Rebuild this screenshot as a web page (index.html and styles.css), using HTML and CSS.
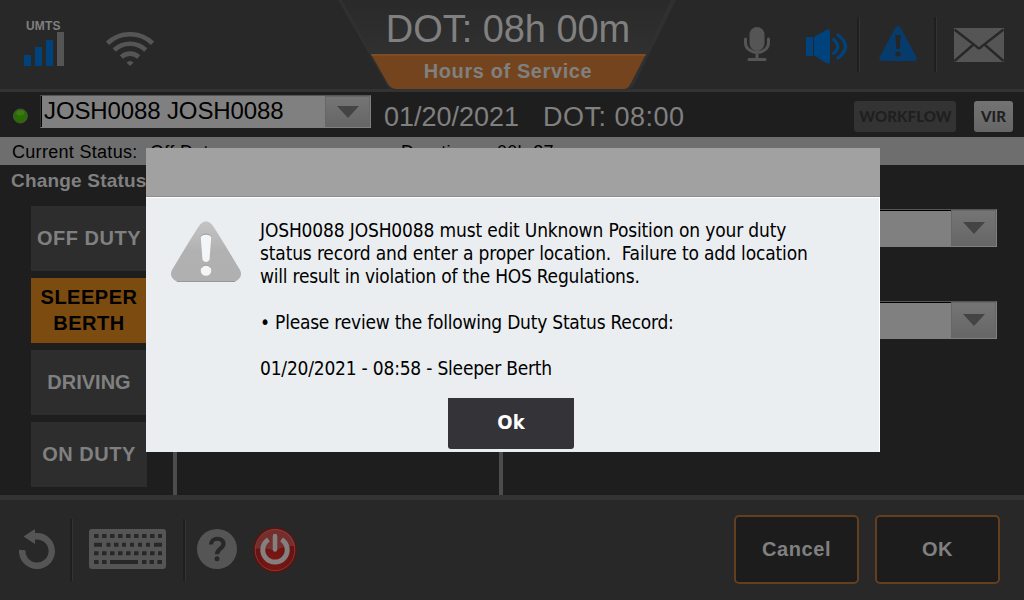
FILE: index.html
```html
<!DOCTYPE html>
<html lang="en">
<head>
<meta charset="utf-8">
<title>Hours of Service</title>
<link rel="stylesheet" href="styles.css">
</head>
<body>
<div class="screen">
  <header class="topbar">
    <div class="signals">
      <div class="umts">
        <span class="umts-label">UMTS</span>
        <svg width="40" height="34" viewBox="0 0 40 34"><path fill="#00427c" d="M0 23h7v11H0zM11 15h7v19h-7zM22 8h7v26h-7z"/><path fill="#555" d="M33 0h7v34h-7z"/></svg>
      </div>
      <svg class="wifi" width="48" height="34" viewBox="0 0 48 34" fill="none" stroke="#555" stroke-width="4.6"><path d="M1.5 11.3a32.5 32.5 0 0 1 45 0M8.2 18a23 23 0 0 1 31.6 0M15.3 25a13 13 0 0 1 17.4 0"/><path fill="#555" stroke="none" d="M20.4 30.4q3.6-3 7.2 0L24 34z"/></svg>
    </div>
    <div class="clock">
      <svg class="clock-shape" width="340" height="90" viewBox="0 0 340 90">
        <defs><linearGradient id="panel" x2="0" y2="1"><stop stop-color="#2a2a2a"/><stop offset="1" stop-color="#303030"/></linearGradient></defs>
        <path fill="#303030" d="M0 0h338L297 83q-4 7-9 7H58q-7 0-10-6z"/>
        <path fill="url(#panel)" d="M4 0h329L308 54H34z"/>
        <path fill="#74441e" d="M33 54h275l-15 29q-3 6-7 6H59q-6 0-9-5z"/>
        <path fill="#7f4d25" d="M33 54h275l-1 2H34z"/>
      </svg>
      <div class="clock-time">DOT: 08h 00m</div>
      <div class="clock-title">Hours of Service</div>
    </div>
    <div class="tools">
      <svg class="mic" width="26" height="34" viewBox="0 0 26 34"><rect x="5.5" width="15" height="24" rx="7.5" fill="#555"/><path d="M1.5 12v4a11.5 9.5 0 0 0 23 0v-4M13 26v6M5 32.5h16" fill="none" stroke="#555" stroke-width="3" stroke-linecap="round"/></svg>
      <svg class="speaker" width="42" height="35" viewBox="0 0 42 35"><path fill="#00427c" d="M0 8h7v19H0zM8 8L21.5.3q2.500-.8 2.500 2.700v29q0 3.500-2.500 2.700L8 26.500z"/><path d="M27.500 10.500q8.500 7 0 14M32 6q15 11.500 0 23" fill="none" stroke="#00427c" stroke-width="3.400" stroke-linecap="round"/></svg>
      <i class="rule"></i>
      <svg class="alert" width="38" height="35" viewBox="0 0 38 35"><path fill="#073b6c" d="M16.200 2q2.800-4 5.600 0l15.700 29q1 4-2.500 4H3q-3.500 0-2.500-4z"/><path fill="#242627" d="M16.300 9h5.400l-1 14h-3.400z"/><circle cx="19" cy="28" r="2.600" fill="#242627"/></svg>
      <i class="rule"></i>
      <svg class="mail" width="50" height="34" viewBox="0 0 50 34"><path fill="#555" d="M0 0h50v34H0z"/><path d="M.5 1.500L22.500 18.500Q25 22 27.500 18.500L49.500 1.500M.5 33L19.500 16.500M49.500 33L30.500 16.500" fill="none" stroke="#282828" stroke-width="2.400"/></svg>
    </div>
  </header>

  <section class="driverbar">
    <svg class="led" width="16" height="16" viewBox="0 0 16 16"><circle cx="8.400" cy="8" r="7" fill="#2b6c00" stroke="#475240" stroke-width="1"/><ellipse cx="8.400" cy="4.800" rx="4" ry="2.600" fill="#3c7a18"/></svg>
    <div class="select driver"><span class="select-text">JOSH0088 JOSH0088</span><span class="select-button"></span></div>
    <span class="stamp">01/20/2021</span>
    <span class="stamp dot">DOT: 08:00</span>
    <button class="chip workflow">WORKFLOW</button>
    <button class="chip vir">VIR</button>
  </section>

  <section class="statusbar">
    <span class="status-label">Current Status:</span>
    <span class="status-value">Off Duty</span>
    <span class="duration-label">Duration:</span>
    <span>00h 27m</span>
  </section>

  <main class="main">
    <div class="change">
      <h2 class="change-title">Change Status</h2>
      <div class="duties">
        <button class="duty">OFF DUTY</button>
        <button class="duty active">SLEEPER BERTH</button>
        <button class="duty driving">DRIVING</button>
        <button class="duty">ON DUTY</button>
      </div>
    </div>
    <div class="middle"></div>
    <div class="fields">
      <div class="select field"><span class="select-text"></span><span class="select-button"></span></div>
      <div class="select field"><span class="select-text"></span><span class="select-button"></span></div>
    </div>
  </main>

  <footer class="bottombar">
    <svg class="back" width="36" height="40" viewBox="0 0 36 40"><path d="M3.200 21A14.800 14.800 0 1 0 18 7.200h-3" fill="none" stroke="#555" stroke-width="6.400"/><path fill="#555" d="M4.500 7.500L16 0v15z"/></svg>
    <i class="rule"></i>
    <svg class="keyboard" width="77" height="40" viewBox="0 0 77 40"><rect width="77" height="40" rx="3" fill="#555"/><g fill="none" stroke="#282828" stroke-width="4"><path d="M5 7h68" stroke-dasharray="4.600 3.400"/><path d="M5 15.700h8M17.500 15.700h4M25 15.700h4.500M33 15.700h4M41 15.700h4M49 15.700h4M57 15.700h4M65 15.700h8"/><path d="M5 24.200h68" stroke-dasharray="4.600 3.400"/><path d="M5 33h4.600M13 33h4.600M21 33h28M53 33h4.500M60.500 33h4.500M68.400 33H73"/></g></svg>
    <i class="rule"></i>
    <svg class="help" width="40" height="40" viewBox="0 0 40 40"><circle cx="20" cy="20" r="20" fill="#555"/><path d="M14 15.500c0-7.500 12.500-7.500 12.500-.8 0 5-6.500 4.800-6.500 10.500" fill="none" stroke="#282828" stroke-width="4.200"/><circle cx="20" cy="29.700" r="2.500" fill="#282828"/></svg>
    <svg class="power" width="44" height="46" viewBox="0 0 44 46">
      <defs><radialGradient id="red" cy=".75"><stop stop-color="#7e1714"/><stop offset="1" stop-color="#641412"/></radialGradient></defs>
      <ellipse cx="22" cy="23" rx="21" ry="22" fill="url(#red)" stroke="#5b130e" stroke-width="1.500"/>
      <ellipse cx="22" cy="23" rx="19.800" ry="20.600" fill="none" stroke="#803936"/>
      <path d="M2 22Q6 3 22 2q17 1 20 17-13 0-20 5-8-4-20-2z" fill="#844947" opacity=".5"/>
      <path d="M15.500 12.500a12.200 12.200 0 1 0 13 0" fill="none" stroke="#858080" stroke-width="5"/><path d="M22 9v13.500" stroke="#858080" stroke-width="4.500" stroke-linecap="round"/>
    </svg>
    <button class="action cancel">Cancel</button>
    <button class="action">OK</button>
  </footer>

  <div class="dialog" role="alertdialog">
    <div class="dialog-head"></div>
    <div class="dialog-body">
      <svg class="warning" width="72" height="62" viewBox="0 0 72 62">
        <defs><linearGradient id="grey" x2="0" y2="1"><stop stop-color="#c4c4c4"/><stop offset=".5" stop-color="#b1b1b1"/><stop offset="1" stop-color="#b0b0b0"/></linearGradient></defs>
        <path d="M30.500 3Q36-2.500 41.500 3q4 5 28.500 46 3.500 7-4.500 11.500H6.500Q-1.500 56 2 49 26.500 8 30.500 3z" fill="url(#grey)"/>
        <path d="M7 60.500h58" stroke="#989898"/>
        <path d="M30.800 16.500q0-3 5.200-3t5.200 3L39.500 39q-3.500 4-7 0z" fill="#f4f5f7"/><circle cx="36" cy="49.500" r="5.300" fill="#f4f5f7"/>
        <path d="M31 15.500q1-2.500 5-2.500t5 2.500M31.500 46.500q4.500-5 9 0" fill="none" stroke="#999" stroke-width=".9"/>
      </svg>
      <div class="message">
        <div class="line l1">JOSH0088 JOSH0088 must edit Unknown Position on your duty</div>
        <div class="line l2">status record and enter a proper location.&nbsp; Failure to add location</div>
        <div class="line l3">will result in violation of the HOS Regulations.</div>
        <div class="line gap l4">• Please review the following Duty Status Record:</div>
        <div class="line gap l5">01/20/2021 - 08:58 - Sleeper Berth</div>
      </div>
      <button class="confirm">Ok</button>
    </div>
  </div>
</div>
</body>
</html>
```
FILE: styles.css
```css
* { box-sizing: border-box; }
body { margin: 0; background: #1e1e1e; font-family: "Liberation Sans", Arial, sans-serif; color: #808080; }
button { font-family: inherit; border: 0; margin: 0; padding: 0; color: inherit; }
svg { display: block; flex: none; }
.screen { position: relative; width: 1024px; height: 600px; overflow: hidden; display: flex; flex-direction: column; white-space: nowrap; }

.topbar { height: 92px; flex: none; display: flex; background: #282828; border-bottom: 3px solid #333; }
.signals { width: 338px; display: flex; padding: 20px 0 0 24px; }
.umts { width: 82px; }
.umts-label { display: block; height: 12px; font-size: 12px; line-height: 12px; font-weight: bold; letter-spacing: .2px; margin-left: 2px; }
.wifi { margin-top: 12px; }
.clock { position: relative; width: 340px; text-align: center; }
.clock-shape { position: absolute; left: 0; top: 0; }
.clock-time { position: relative; height: 56px; font-size: 38px; line-height: 59px; letter-spacing: -.05px; }
.clock-title { position: relative; font-size: 20px; line-height: 31px; font-weight: bold; letter-spacing: .6px; }
.tools { flex: 1; display: flex; padding-left: 66px; padding-top: 17px; }
.rule { width: 3px; flex: none; background: linear-gradient(90deg, #1f1f1f 2px, #333 2px); }
.tools .rule { height: 55px; }
.mic { margin: 10px 36px 0 0; }
.speaker { margin: 12px 9px 0 0; }
.alert { margin: 9px 17px 0 19px; }
.mail { margin: 11px 0 0 17px; }

.driverbar { height: 45px; flex: none; display: flex; padding-left: 12px; }
.led { margin: 16px 12px 0 0; }
.select { display: flex; height: 33px; background: #808080; border: 1px solid #808080; border-top-color: #555; border-left: 1px solid #333; }
.select-text { flex: 1; color: #000; border-left: 1px solid #000; }
.select-button { width: 45px; border: 1px solid #666; background: linear-gradient(#757575, #666); display: flex; justify-content: center; align-items: center; }
.select-button::before { content: ""; border: 11px solid transparent; border-top: 12px solid #444; border-bottom: 0; }
.driver { width: 331px; margin-top: 3px; }
.driver .select-text { font-size: 24px; line-height: 30px; padding-left: 2px; letter-spacing: -.12px; }
.stamp { width: 159px; margin-left: 13px; font-size: 27px; line-height: 50px; }
.dot { width: 311px; margin-left: 0; letter-spacing: .5px; }
.chip { height: 31px; margin-top: 9px; border-radius: 3px; font: 900 15px/31px Lato, sans-serif; text-align: center; color: #1f1f1f; }
.workflow { width: 102px; background: #333; letter-spacing: .1px; padding-left: 1px; }
.vir { width: 39px; margin-left: 18px; background: linear-gradient(#737373, #666); }

.statusbar { height: 28px; flex: none; background: #6e6e6e; color: #000; font-size: 18px; line-height: 30px; letter-spacing: .3px; display: flex; padding-left: 12px; }
.status-label { width: 138px; }
.status-value { width: 251px; }
.duration-label { width: 96px; }

.main { height: 330px; flex: none; display: flex; }
.change { width: 177px; border-right: 4px solid #4c4c4c; }
.change-title { margin: 0 0 0 11px; height: 33px; font-size: 19px; line-height: 32px; letter-spacing: .2px; }
.duties { display: grid; gap: 7px; padding: 8px 0 0 31px; }
.duty { width: 116px; height: 65px; padding-bottom: 2px; background: #2d2d2d; font-weight: bold; font-size: 20px; line-height: 26px; letter-spacing: .5px; white-space: normal; }
.active { background: #7c4b0f; color: #000; }
.driving { letter-spacing: 0; }
.middle { width: 326px; border-right: 4px solid #4c4c4c; }
.fields { padding: 44px 0 0 197px; display: grid; gap: 54px; align-content: start; }
.field { width: 297px; height: 38px; }
.field .select-text { border-top: 1px solid #000; }

.bottombar { height: 105px; flex: none; border-top: 5px solid #333; background: #282828; display: flex; padding-left: 19px; }
.bottombar .rule { height: 62px; margin-top: 19px; }
.back { margin: 29px 15px 0 0; }
.keyboard { margin: 29px 17px 0 16px; }
.help { margin: 29px 16px 0 11px; }
.power { margin: 27px 437px 0 0; }
.action { width: 125px; height: 69px; margin-top: 15px; border: 2px solid #633e1f; border-radius: 5px; background: #1c1c1c; font-weight: bold; font-size: 20px; letter-spacing: .6px; }
.cancel { margin-right: 16px; }

.dialog { position: absolute; left: 146px; top: 148px; width: 734px; height: 304px; background: #eaeef1; color: #000; font-family: "DejaVu Sans Condensed", "DejaVu Sans", sans-serif; }
.dialog-head { height: 49px; background: #a1a1a1; border-bottom: 1px solid #8c8c8c; }
.dialog-body { height: 255px; display: grid; grid-template-columns: 114px 1fr; grid-template-rows: 200px 51px; border-top: 1px solid #fff; border-right: 1px solid #fff; }
.warning { margin: 23px 0 0 24px; }
.message { padding-top: 21px; font-size: 19px; line-height: 23px; }
.gap { margin-top: 23px; }
.l1, .l2 { letter-spacing: -.15px; }
.l3, .l4 { letter-spacing: -.23px; }
.l5 { letter-spacing: -.21px; }
.confirm { grid-column: 1 / 3; width: 126px; margin-left: 302px; background: #343438; color: #fff; border-radius: 0 0 3px 3px; font-weight: bold; font-size: 20px; padding-bottom: 4px; }
```
